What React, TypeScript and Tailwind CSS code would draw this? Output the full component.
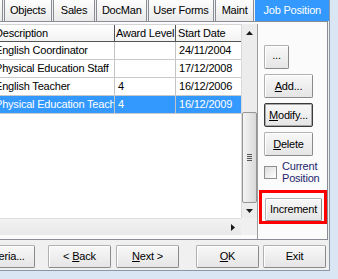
import type { ReactNode } from "react";

type Row = {
  description: string;
  award: string;
  start: string;
  selected?: boolean;
};

const rows: Row[] = [
  { description: "English Coordinator", award: "", start: "24/11/2004" },
  { description: "Physical Education Staff", award: "", start: "17/12/2008" },
  { description: "English Teacher", award: "4", start: "16/12/2006" },
  { description: "Physical Education Teacher", award: "4", start: "16/12/2009", selected: true }
];

const tabs = [
  { label: "", width: "w-[3px]" },
  { label: "Objects", width: "w-[48px]" },
  { label: "Sales", width: "w-[43px]" },
  { label: "DocMan", width: "w-[51px]" },
  { label: "User Forms", width: "w-[66px]" },
  { label: "Maint", width: "w-[40px]" }
];

function WinButton({
  children,
  className = "",
  focused = false
}: {
  children: ReactNode;
  className?: string;
  focused?: boolean;
}) {
  return (
    <div
      className={`flex items-center justify-center rounded-[2px] border bg-linear-to-b from-[#f8f8f8] to-[#e5e5e5] ${
        focused
          ? "border-[#3a3a3a] shadow-[inset_0_0_0_1px_#a9a9a9]"
          : "border-[#b0b0b0] border-r-[#8a8a8a] border-b-[#8a8a8a] shadow-[inset_1px_1px_0_#ffffff]"
      } ${className}`}
    >
      {children}
    </div>
  );
}

function Arrow({ dir }: { dir: "up" | "down" | "right" }) {
  const points = dir === "up" ? "0,4 3.5,0 7,4" : dir === "down" ? "0,0 7,0 3.5,4" : "0,0 4,3.5 0,7";
  const size = dir === "right" ? { w: 4, h: 7 } : { w: 7, h: 4 };
  return (
    <svg width={size.w} height={size.h} viewBox={`0 0 ${size.w} ${size.h}`}>
      <polygon points={points} fill="#1a1a1a" />
    </svg>
  );
}

function Grid() {
  return (
    <div className="flex w-[258px] flex-col border-r border-[#9c9c9c]">
      <div className="flex h-[194px]">
        <div className="w-[241px] overflow-hidden bg-white">
          <div className="flex h-[18px] border-t border-b border-t-[#d4d4d4] border-b-[#555555] bg-linear-to-b from-white to-[#f3f3f3]">
            <div className="flex w-[115px] items-center overflow-hidden border-r border-[#555555] whitespace-nowrap">
              <span className="-ml-[5px]">Description</span>
            </div>
            <div className="flex w-[61px] items-center overflow-hidden border-r border-[#555555] pl-[1px] whitespace-nowrap">
              Award Level
            </div>
            <div className="flex flex-1 items-center overflow-hidden pl-[2px] whitespace-nowrap">Start Date</div>
          </div>
          {rows.map((row) => (
            <div
              key={row.start}
              className={`flex h-[18px] border-b border-[#c9c9c9] ${
                row.selected ? "bg-[#3399ff] text-white" : "text-black"
              }`}
            >
              <div className="flex w-[115px] items-center overflow-hidden border-r border-[#c4c4c4] whitespace-nowrap">
                <span className="-ml-[5px]">{row.description}</span>
              </div>
              <div className="flex w-[61px] items-center overflow-hidden border-r border-[#c4c4c4] pl-[3px] whitespace-nowrap">
                {row.award}
              </div>
              <div className="flex flex-1 items-center overflow-hidden pl-[3px] whitespace-nowrap">{row.start}</div>
            </div>
          ))}
        </div>
        <div className="flex w-[16px] flex-col border-l border-[#d9d9d9] bg-[#ececec]">
          <div className="flex h-[18px] items-center justify-center">
            <Arrow dir="up" />
          </div>
          <div className="h-[70px]" />
          <div className="flex h-[91px] items-center justify-center rounded-[2px] border border-[#959595] bg-linear-to-r from-[#f4f4f4] to-[#d9d9d9]">
            <div className="flex flex-col gap-[1px]">
              <div className="h-px w-[5px] bg-[#555555]" />
              <div className="h-px w-[5px] bg-[#555555]" />
              <div className="h-px w-[5px] bg-[#555555]" />
              <div className="h-px w-[5px] bg-[#555555]" />
            </div>
          </div>
          <div className="flex flex-1 items-center justify-center">
            <Arrow dir="down" />
          </div>
        </div>
      </div>
      <div className="flex h-[17px]">
        <div className="flex w-[241px] items-center justify-end border-t border-[#dedede] bg-linear-to-b from-[#f3f3f3] to-[#e8e8e8] pr-[6px]">
          <Arrow dir="right" />
        </div>
        <div className="flex-1 bg-[#f0f0f0]" />
      </div>
    </div>
  );
}

function SidePanel() {
  return (
    <div className="relative flex flex-1 flex-col pt-[21px] pl-[6px]">
      <WinButton className="h-[24px] w-[25px] pb-[4px]">...</WinButton>
      <WinButton className="mt-[5px] h-[24px] w-[49px]">
        <span>
          <u>A</u>dd...
        </span>
      </WinButton>
      <WinButton focused className="mt-[5px] h-[24px] w-[49px]">
        <span>
          <u>M</u>odify...
        </span>
      </WinButton>
      <WinButton className="mt-[5px] h-[24px] w-[49px]">
        <span>
          <u>D</u>elete
        </span>
      </WinButton>
      <div className="mt-[4px] flex h-[24px] items-center gap-[5px]">
        <div className="h-[13px] w-[13px] border border-[#8f8f8f] bg-linear-to-br from-[#dcdcdc] to-white" />
        <div className="leading-[12px] text-[#1f1f6e]">
          Current
          <br />
          Position
        </div>
      </div>
      <WinButton className="mt-[14px] ml-[1px] h-[23px] w-[57px]">Increment</WinButton>
    </div>
  );
}

export default function App() {
  return (
    <div className="relative h-[279px] w-[338px] overflow-hidden bg-[#dae6f4] font-['Liberation_Sans',Arial,sans-serif] text-[11px] tracking-[-0.2px] text-black">
      <div className="flex h-[271px] w-[330px] flex-col border-r border-b border-[#8b98a7] bg-[#f0f0f0]">
        <div className="flex h-[21px] gap-px">
          {tabs.map((tab, i) => (
            <div
              key={i}
              className={`flex items-center justify-center border-r border-l border-[#898c95] bg-linear-to-b from-[#fdfdfd] to-[#eaeaea] whitespace-nowrap ${tab.width} ${
                i === 0 ? "border-l-0" : ""
              }`}
            >
              {tab.label}
            </div>
          ))}
          <div className="flex w-[74px] items-center justify-center bg-[#3399ff] text-white whitespace-nowrap">
            Job Position
          </div>
        </div>
        <div className="flex h-[219px] w-[328px] border-t border-r border-b border-[#898c95] bg-[#fbfbfb] pt-[2px]">
          <Grid />
          <SidePanel />
        </div>
        <div className="mt-[5px] flex h-[23px]">
          <WinButton className="-ml-[28px] w-[63px]">Criteria...</WinButton>
          <WinButton className="ml-[13px] w-[63px]">
            <span>
              &lt; <u>B</u>ack
            </span>
          </WinButton>
          <WinButton className="ml-[5px] w-[63px]">
            <span>
              <u>N</u>ext &gt;
            </span>
          </WinButton>
          <WinButton className="ml-[17px] w-[63px]">
            <span>
              <u>O</u>K
            </span>
          </WinButton>
          <WinButton className="ml-[4px] w-[63px]">Exit</WinButton>
        </div>
      </div>
      <div className="absolute top-[190px] left-[259px] h-[34px] w-[68px] border-[3px] border-[#ff0000]" />
    </div>
  );
}
